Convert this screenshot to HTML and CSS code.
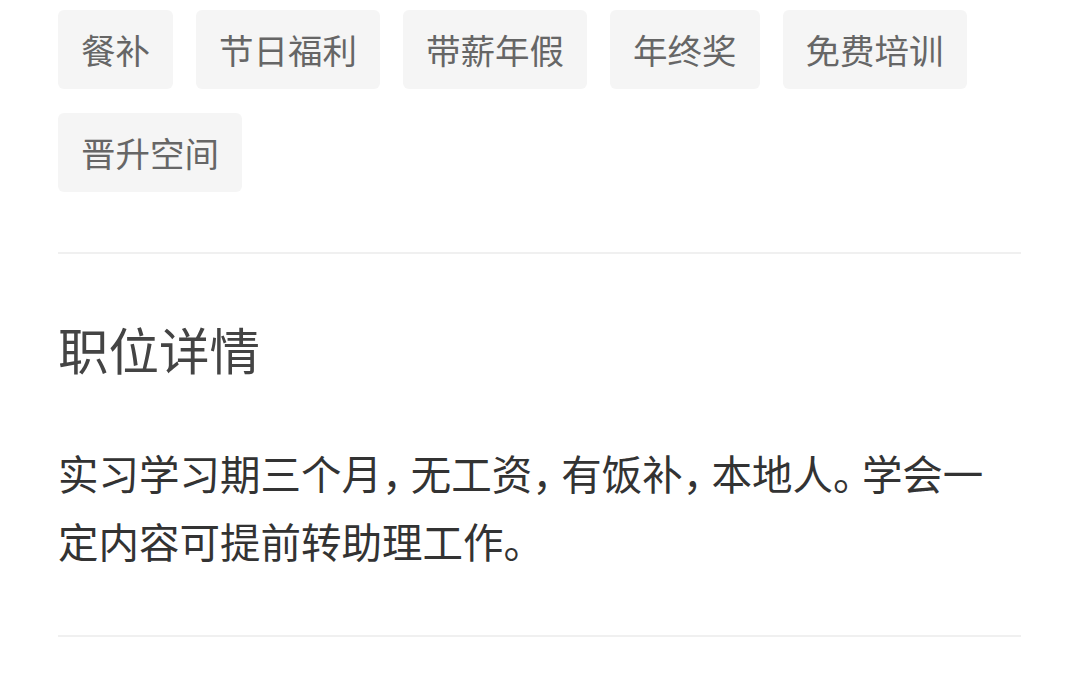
FILE: index.html
```html
<!DOCTYPE html>
<html lang="zh-CN">
<head>
  <meta charset="UTF-8" />
  <meta name="viewport" content="width=device-width, initial-scale=1.0"/>
  <title>职位详情</title>
  <link rel="stylesheet" href="styles.css">
</head>
<body>

  <div class="tags">
    <span class="tag">餐补</span>
    <span class="tag">节日福利</span>
    <span class="tag">带薪年假</span>
    <span class="tag">年终奖</span>
    <span class="tag">免费培训</span>
    <span class="tag">晋升空间</span>
  </div>

  <div class="section">
    <h2>职位详情</h2>
    <p class="desc">实习学习期三个月<span class="punct">，</span>无工资<span class="punct">，</span>有饭补<span class="punct">，</span>本地人<span class="punct">。</span>学会一定内容可提前转助理工作<span class="punct">。</span></p>
  </div>

</body>
</html>
```

FILE: styles.css
```css
body {
  margin: 0;
  padding: 10px 59px 0 58px;
  background: #fff;
  font-family: "Noto Sans CJK SC", "Noto Sans", sans-serif;
  color: #333;
}
.tags {
  display: flex;
  flex-wrap: wrap;
  gap: 24px 23px;
  padding-bottom: 60px;
  border-bottom: 2px solid #f0f0f0;
}
.tag {
  background: #f5f5f5;
  color: #666;
  font-size: 34.5px;
  line-height: 47px;
  padding: 16px 23px;
  border-radius: 6px;
}
.section {
  padding: 59px 0 60px;
  border-bottom: 2px solid #f0f0f0;
}
.section h2 {
  margin: 0;
  font-size: 50.5px;
  font-weight: normal;
  line-height: 70px;
  color: #444;
}
.desc {
  margin: 56px 0 0;
  font-size: 40.5px;
  line-height: 68px;
  color: #333;
}
.punct {
  font-feature-settings: "halt";
  padding-right: 8.6px;
}
```
